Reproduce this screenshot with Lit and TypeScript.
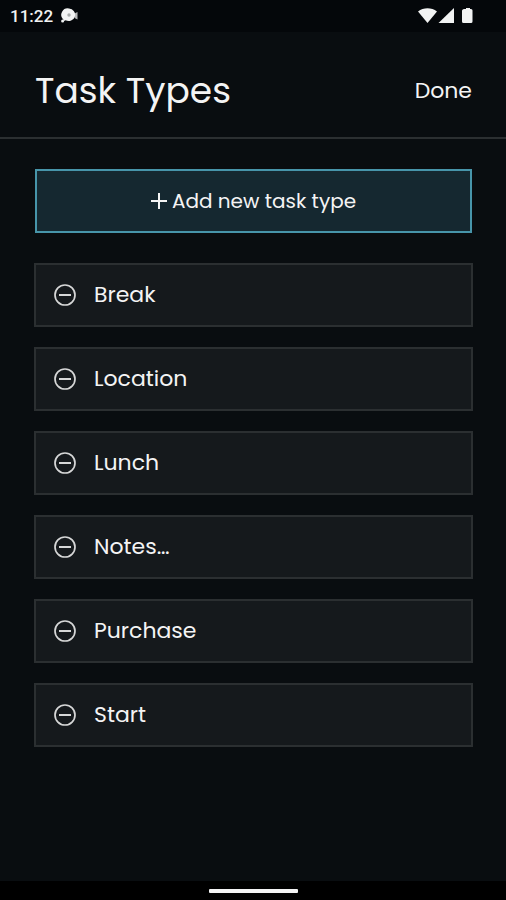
import { LitElement, html, css } from "lit";
import { customElement, property, state } from "lit/decorators.js";

@customElement("status-bar")
class StatusBar extends LitElement {
  static styles = css`
    :host {
      display: flex;
      align-items: center;
      justify-content: space-between;
      height: 32px;
      padding: 0 32px 0 10px;
      background: #04070a;
      font: 500 17px/32px Roboto, sans-serif;
      color: #f2f3f3;
    }
    .group {
      display: flex;
      align-items: center;
      gap: 8px;
    }
    svg {
      display: block;
      fill: currentColor;
    }
  `;

  render() {
    return html`
      <div class="group">
        <span>11:22</span>
        <svg width="18" height="16" viewBox="0 0 18 16" aria-hidden="true">
          <path d="M8 .5a6.500 6.300 0 1 1-3.500 11.800L3.500 13 2 11.300A6.500 6.500 0 0 1 8 .5z" />
          <circle cx="1.600" cy="13" r="1.500" />
          <path d="M13.500 5.500l3-1.500v7.500l-3-1.500z" opacity=".75" />
          <circle cx="8" cy="7" r="1.700" fill="#a9acad" />
        </svg>
      </div>
      <svg width="56" height="18" viewBox="0 0 56 18" aria-hidden="true">
        <path d="M0 4.500C5.500.300 13.500.300 19 4.500L9.500 16z" />
        <path d="M36 1v15H20.500z" />
        <path d="M47 2h1V1h4v1h1q1.500 0 1.500 1.500v11q0 1.500-1.500 1.500h-7.500q-1.500 0-1.500-1.500v-11Q44.500 2 46 2z" />
      </svg>
    `;
  }
}

@customElement("task-type-row")
class TaskTypeRow extends LitElement {
  @property() name = "";

  static styles = css`
    :host {
      display: flex;
      align-items: center;
      gap: 17px;
      box-sizing: border-box;
      height: 64px;
      padding: 0 17px;
      border: 2px solid #2b2f31;
      background: #15191c;
      color: #f4f4f4;
      font-size: 22px;
      line-height: 32px;
    }
    button {
      display: block;
      padding: 0;
      border: 0;
      background: none;
      color: #d6d7d7;
      cursor: pointer;
    }
    svg {
      display: block;
      fill: none;
      stroke: currentColor;
    }
  `;

  private remove() {
    this.dispatchEvent(new CustomEvent("remove"));
  }

  render() {
    return html`
      <button aria-label="Remove ${this.name}" @click=${this.remove}>
        <svg width="24" height="24" viewBox="0 0 24 24">
          <circle cx="12" cy="12" r="10" stroke-width="1.700" />
          <path d="M6 12h12" stroke-width="2" />
        </svg>
      </button>
      <span>${this.name}</span>
    `;
  }
}

@customElement("app-root")
class AppRoot extends LitElement {
  @state() private types = ["Break", "Location", "Lunch", "Notes…", "Purchase", "Start"];

  static styles = css`
    :host {
      display: flex;
      flex-direction: column;
      min-height: 100vh;
      background: #090d10;
      color: #f4f4f4;
      font-family: Poppins, Inter, sans-serif;
    }
    header {
      display: flex;
      align-items: center;
      justify-content: space-between;
      padding: 31px 34px 18px 35px;
      border-bottom: 2px solid #2b2f31;
    }
    h1 {
      margin: 0;
      font-size: 36px;
      font-weight: 400;
      line-height: 56px;
    }
    button {
      font-family: inherit;
      color: inherit;
      cursor: pointer;
    }
    .done {
      padding: 0;
      border: 0;
      background: none;
      font-size: 22px;
      line-height: 32px;
    }
    main {
      display: flex;
      flex: 1;
      flex-direction: column;
      gap: 30px;
      padding: 30px 33px 32px 34px;
    }
    .add {
      display: flex;
      align-items: center;
      justify-content: center;
      gap: 5px;
      box-sizing: border-box;
      height: 64px;
      margin: 0 1px;
      border: 2px solid #4795aa;
      background: #152830;
      font-size: 20px;
      line-height: 32px;
    }
    .add svg {
      fill: none;
      stroke: currentColor;
      stroke-width: 2;
    }
    .list {
      display: flex;
      flex-direction: column;
      gap: 20px;
      margin: 0;
      padding: 0;
      list-style: none;
    }
    footer {
      display: flex;
      align-items: center;
      justify-content: center;
      height: 19px;
      background: #000;
    }
    .handle {
      width: 89px;
      height: 4px;
      border-radius: 1px;
      background: #f4f4f4;
    }
  `;

  private remove(name: string) {
    this.types = this.types.filter((type) => type !== name);
  }

  render() {
    return html`
      <status-bar></status-bar>
      <header>
        <h1>Task Types</h1>
        <button class="done">Done</button>
      </header>
      <main>
        <button class="add">
          <svg width="16" height="16" viewBox="0 0 16 16" aria-hidden="true">
            <path d="M8 0v16M0 8h16" />
          </svg>
          <span>Add new task type</span>
        </button>
        <ul class="list">
          ${this.types.map(
            (name) => html`<li>
              <task-type-row .name=${name} @remove=${() => this.remove(name)}></task-type-row>
            </li>`
          )}
        </ul>
      </main>
      <footer><div class="handle"></div></footer>
    `;
  }
}
